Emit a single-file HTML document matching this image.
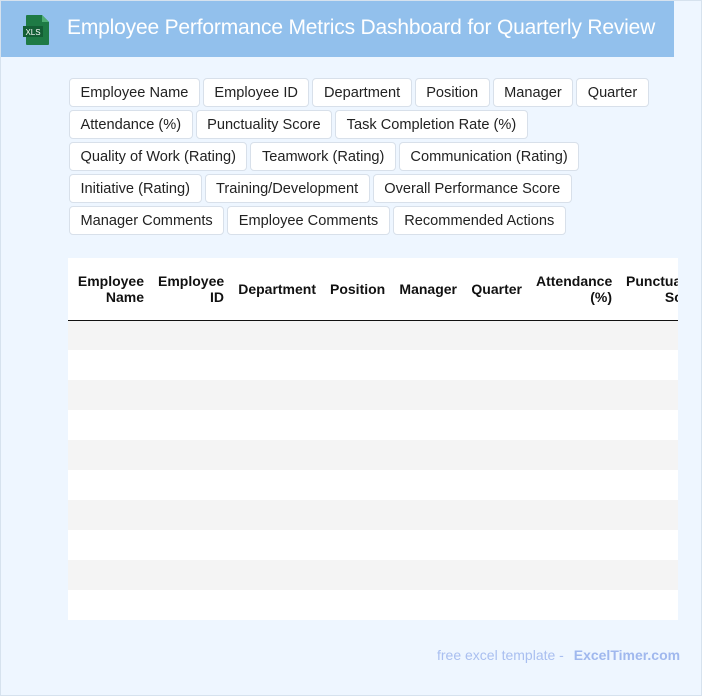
<!DOCTYPE html>
<html><head><meta charset="utf-8"><style>
*{box-sizing:border-box;margin:0;padding:0}
body{width:702px;height:696px;background:#eef6ff;font-family:"Liberation Sans",Roboto,sans-serif;position:relative;overflow:hidden}
.bd{position:absolute;left:0;top:0;width:702px;height:696px;border:1px solid #d6e2ee}
.hdr{position:absolute;left:1px;top:1px;width:673px;height:56px;background:#92c0ec}
.hdr h1{position:absolute;left:66px;top:15px;font-size:21px;font-weight:normal;color:#fff;white-space:nowrap;letter-spacing:-0.18px}
.tags{position:absolute;left:69px;top:78px;width:600px;font-size:0}
.tag{display:inline-block;height:29px;line-height:29px;border:1px solid #d8e0ea;border-radius:4px;background:#fff;padding:0 10.5px;font-size:14.6px;color:#222;margin:0 3px 3px 0;vertical-align:top;letter-spacing:0}
.tw{position:absolute;left:68px;top:258px;width:610px;height:362px;background:#fff;overflow:hidden}
table{border-collapse:collapse;table-layout:fixed;width:700px}
th{height:62px;font-size:14px;font-weight:bold;text-align:right;padding:0 7px;color:#111;border-bottom:1.5px solid #111;vertical-align:middle;line-height:16px}
td{height:30px}
tr.g td{background:#f4f4f4}
.ft{position:absolute;top:647px;left:437px;font-size:14px;color:#a9bff0}
.ft b{color:#a0b8ee;margin-left:6px}
</style></head><body>
<div class="bd"></div>
<div class="hdr">
<svg style="position:absolute;left:21px;top:13px" width="30" height="32" viewBox="0 0 30 32"><path d="M5 1h15l7 7v22a1 1 0 0 1-1 1H5a1 1 0 0 1-1-1V2a1 1 0 0 1 1-1z" fill="#1e7a45"/><path d="M20 1v7h7z" fill="#4fae74"/><rect x="1" y="12" width="20" height="11" fill="#135e35"/><text x="11" y="21" font-size="8" fill="#fff" text-anchor="middle" font-family="Liberation Sans">XLS</text></svg>
<h1>Employee Performance Metrics Dashboard for Quarterly Review</h1></div>
<div class="tags">
<span class="tag">Employee Name</span><span class="tag">Employee ID</span><span class="tag">Department</span><span class="tag">Position</span><span class="tag">Manager</span><span class="tag">Quarter</span><br>
<span class="tag">Attendance (%)</span><span class="tag">Punctuality Score</span><span class="tag">Task Completion Rate (%)</span><br>
<span class="tag">Quality of Work (Rating)</span><span class="tag">Teamwork (Rating)</span><span class="tag">Communication (Rating)</span><br>
<span class="tag">Initiative (Rating)</span><span class="tag">Training/Development</span><span class="tag">Overall Performance Score</span><br>
<span class="tag">Manager Comments</span><span class="tag">Employee Comments</span><span class="tag">Recommended Actions</span>
</div>
<div class="tw"><table>
<colgroup><col style="width:83px"><col style="width:80px"><col style="width:92px"><col style="width:69px"><col style="width:72px"><col style="width:65px"><col style="width:90px"><col style="width:149px"></colgroup>
<tr><th>Employee Name</th><th>Employee ID</th><th>Department</th><th>Position</th><th>Manager</th><th>Quarter</th><th>Attendance (%)</th><th style="text-align:left">Punctuality<br>&nbsp;&nbsp;&nbsp;&nbsp;&nbsp;&nbsp;&nbsp;&nbsp;&nbsp;&nbsp;Score</th></tr>
<tr class="g"><td colspan="8"></td></tr><tr><td colspan="8"></td></tr>
<tr class="g"><td colspan="8"></td></tr><tr><td colspan="8"></td></tr>
<tr class="g"><td colspan="8"></td></tr><tr><td colspan="8"></td></tr>
<tr class="g"><td colspan="8"></td></tr><tr><td colspan="8"></td></tr>
<tr class="g"><td colspan="8"></td></tr><tr><td colspan="8"></td></tr>
</table></div>
<div class="ft">free excel template - <b>ExcelTimer.com</b></div>
</body></html>
